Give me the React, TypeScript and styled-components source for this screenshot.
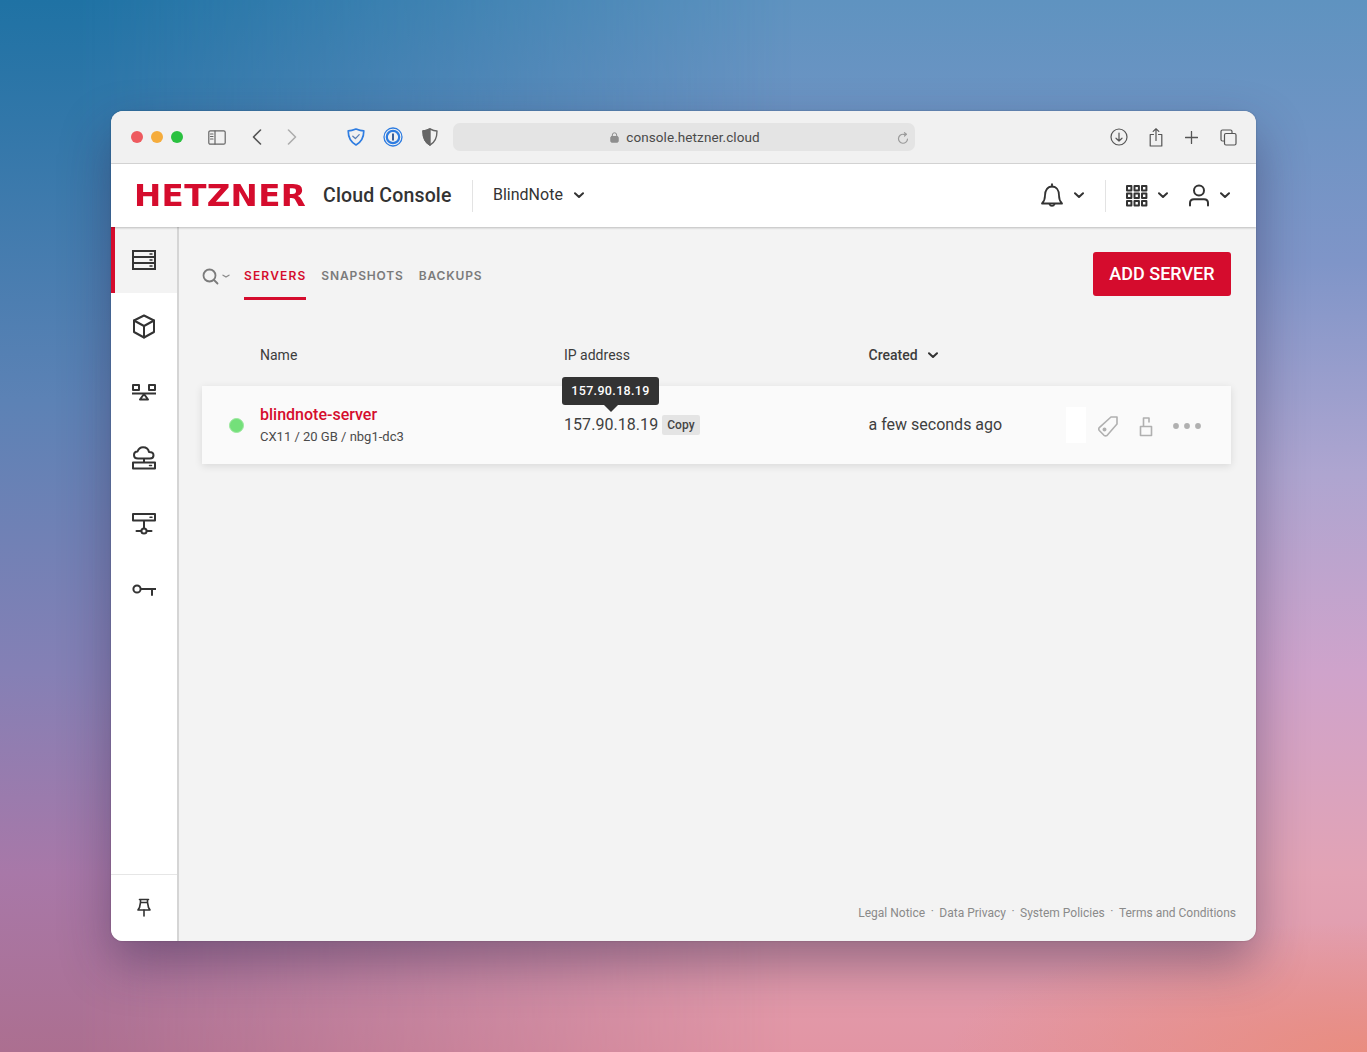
import { FunctionComponent, ReactNode } from "react";
import styled, { createGlobalStyle } from "styled-components";

const GlobalStyle = createGlobalStyle`
  html, body {
    margin: 0;
    padding: 0;
  }
  body {
    font-family: Roboto, "Liberation Sans", sans-serif;
    color: #333333;
  }
`;

const Page = styled.div`
  position: relative;
  width: 1367px;
  height: 1052px;
  box-sizing: border-box;
  padding: 111px;
  overflow: hidden;
  background:
    radial-gradient(ellipse 420px 130px at 100% 100%, #e98d80 0%, rgba(233, 141, 128, 0) 100%),
    linear-gradient(180deg, #5f93c0 0%, #7f95c8 25%, #aea5d0 45%, #cfa3cb 64%, #e2a3b5 83%, #e295a4 100%);
  &::before {
    content: "";
    position: absolute;
    inset: 0;
    background: linear-gradient(180deg, #1f72a4 0%, #5c82b5 38%, #8580b5 64%, #a878a8 83%, #ac6f90 100%);
    -webkit-mask-image: linear-gradient(90deg, #000 0%, #000 6%, transparent 58%);
    mask-image: linear-gradient(90deg, #000 0%, #000 6%, transparent 58%);
  }
`;

const Window = styled.div`
  position: relative;
  width: 1145px;
  height: 830px;
  border-radius: 12px;
  overflow: hidden;
  display: flex;
  flex-direction: column;
  background: #f3f3f3;
  box-shadow: 0 22px 50px rgba(40, 30, 70, 0.42), 0 0 2px rgba(0, 0, 0, 0.25);
`;

/* safari bar */
const Toolbar = styled.div`
  height: 52px;
  flex: none;
  display: flex;
  align-items: center;
  padding-left: 20px;
  background: #f1f1f1;
  border-bottom: 1px solid #d6d6d6;
`;

const Light = styled.span<{ $color: string }>`
  width: 12px;
  height: 12px;
  border-radius: 50%;
  margin-right: 8px;
  background: ${(p) => p.$color};
`;

const ToolSlot = styled.span<{ $left: number; $width?: number }>`
  display: flex;
  justify-content: center;
  align-items: center;
  flex: none;
  width: ${(p) => p.$width ?? 20}px;
  margin-left: ${(p) => p.$left}px;
`;

const UrlBar = styled.div`
  position: relative;
  width: 462px;
  height: 28px;
  margin-left: 13px;
  flex: none;
  border-radius: 7px;
  background: #e4e4e4;
  display: flex;
  align-items: center;
  justify-content: center;
  gap: 7px;
  padding-left: 2px;
  font-size: 13.5px;
  letter-spacing: 0.08px;
  color: #4a4a4a;
  font-family: Roboto, sans-serif;
  box-sizing: border-box;
`;

const Reload = styled.span`
  position: absolute;
  right: 6px;
  top: 9px;
  display: flex;
`;

/* hetzner header */
const Header = styled.header`
  height: 63px;
  flex: none;
  display: flex;
  align-items: center;
  padding-left: 23px;
  background: #ffffff;
  box-shadow: 0 1px 2px rgba(0, 0, 0, 0.22);
  position: relative;
  z-index: 2;
`;

const Logo = styled.div`
  width: 174px;
  flex: none;
  font-family: "DejaVu Sans", sans-serif;
  font-weight: 700;
  font-size: 30px;
  line-height: 30px;
  letter-spacing: 0.3px;
  color: #d50c2d;
  white-space: nowrap;
  transform: scaleX(1.085);
  transform-origin: left center;
`;

const ConsoleTitle = styled.div`
  margin-left: 15px;
  width: 149px;
  flex: none;
  font-family: Roboto, sans-serif;
  font-weight: 500;
  font-size: 19.5px;
  letter-spacing: 0.15px;
  color: #333333;
  white-space: nowrap;
  margin-top: -1px;
`;

const HeaderDivider = styled.span<{ $left: number }>`
  width: 1px;
  height: 32px;
  flex: none;
  background: #e3e3e3;
  margin-left: ${(p) => p.$left}px;
`;

const ProjectName = styled.div`
  margin-left: 20px;
  width: 71px;
  flex: none;
  font-size: 16px;
  color: #333333;
  white-space: nowrap;
  margin-top: -2px;
`;

const HeaderIcon = styled.span<{ $left: number }>`
  display: flex;
  flex: none;
  margin-left: ${(p) => p.$left}px;
`;

const Body = styled.div`
  flex: 1;
  min-height: 0;
  display: flex;
`;

const Sidebar = styled.nav`
  width: 66px;
  flex: none;
  display: flex;
  flex-direction: column;
  background: #ffffff;
  border-right: 2px solid #d5d5d5;
`;

const NavItem = styled.div<{ $active?: boolean }>`
  height: 66px;
  flex: none;
  display: flex;
  align-items: center;
  justify-content: center;
  box-sizing: border-box;
  background: ${(p) => (p.$active ? "#f3f3f3" : "#ffffff")};
  border-left: 4px solid ${(p) => (p.$active ? "#d50c2d" : "#ffffff")};
  padding-right: 4px;
`;

const PinBox = styled.div`
  margin-top: auto;
  height: 67px;
  flex: none;
  box-sizing: border-box;
  padding-bottom: 2px;
  display: flex;
  align-items: center;
  justify-content: center;
  border-top: 1px solid #e6e6e6;
`;

const Main = styled.main`
  flex: 1;
  min-width: 0;
  display: flex;
  flex-direction: column;
  padding: 0 20px 0 23px;
`;

const TabsRow = styled.div`
  height: 73px;
  flex: none;
  display: flex;
  align-items: flex-end;
  padding-right: 5px;
`;

const SearchToggle = styled.div`
  height: 48px;
  width: 42px;
  flex: none;
  display: flex;
  align-items: center;
  gap: 3px;
  box-sizing: border-box;
`;

const Tab = styled.div<{ $active?: boolean }>`
  height: 48px;
  box-sizing: border-box;
  margin-right: 15px;
  display: flex;
  align-items: center;
  font-family: Inter, sans-serif;
  font-size: 12px;
  font-weight: 600;
  letter-spacing: ${(p) => (p.$active ? "1.15px" : "0.85px")};
  color: ${(p) => (p.$active ? "#d50c2d" : "#7b7b7b")};
  border-bottom: 3px solid ${(p) => (p.$active ? "#d50c2d" : "transparent")};
  padding-top: 1px;
`;

const AddButton = styled.button`
  margin-left: auto;
  align-self: flex-end;
  margin-bottom: 4px;
  width: 138px;
  height: 44px;
  border: 0;
  border-radius: 3px;
  background: #d50c2d;
  color: #ffffff;
  font-family: Roboto, sans-serif;
  font-size: 18px;
  font-weight: 500;
  padding: 0 0 2px;
`;

const TableHead = styled.div`
  height: 86px;
  flex: none;
  box-sizing: border-box;
  display: grid;
  grid-template-columns: 362px 304.5px 1fr;
  align-items: end;
  padding-bottom: 23px;
  font-size: 14px;
  line-height: 16px;
  color: #3c3c3c;
  margin-right: 5px;
`;

const HeadCell = styled.div<{ $first?: boolean; $bold?: boolean }>`
  padding-left: ${(p) => (p.$first ? "58px" : "0")};
  font-weight: ${(p) => (p.$bold ? 500 : 400)};
  display: flex;
  align-items: center;
  gap: 10px;
`;

const ServerRow = styled.div`
  height: 78px;
  flex: none;
  margin-right: 5px;
  display: grid;
  grid-template-columns: 362px 304.5px 1fr;
  align-items: center;
  background: #fafafa;
  box-shadow: 0 2px 8px rgba(0, 0, 0, 0.11);
`;

const NameCell = styled.div`
  display: flex;
  align-items: center;
  padding-left: 27px;
`;

const StatusDot = styled.span`
  width: 15px;
  height: 15px;
  flex: none;
  border-radius: 50%;
  margin-right: 16px;
  background: #74e07a;
  border: 1px solid #9ce89f;
  box-sizing: border-box;
`;

const ServerName = styled.div`
  font-size: 16px;
  font-weight: 500;
  color: #d50c2d;
  line-height: 20px;
`;

const ServerMeta = styled.div`
  font-size: 13px;
  color: #4a4a4a;
  line-height: 16px;
  margin-top: 4px;
`;

const IpCell = styled.div`
  position: relative;
  display: flex;
  align-items: center;
  gap: 4px;
  font-size: 16px;
  letter-spacing: 0.05px;
  color: #3f3f3f;
  margin-top: -1px;
`;

const CopyTag = styled.span`
  font-size: 12px;
  font-weight: 500;
  letter-spacing: 0.1px;
  padding: 0 5px;
  height: 20px;
  line-height: 20px;
  border-radius: 2px;
  background: #e4e4e4;
  color: #444444;
`;

const Tooltip = styled.div`
  position: absolute;
  left: -2px;
  top: -38px;
  width: 97px;
  height: 28px;
  border-radius: 3px;
  background: #333333;
  color: #ffffff;
  font-size: 12.5px;
  font-weight: 500;
  letter-spacing: 0.35px;
  line-height: 28px;
  text-align: center;
  &::after {
    content: "";
    position: absolute;
    left: 42px;
    top: 28px;
    border: 7px solid transparent;
    border-top-color: #333333;
    border-bottom: 0;
  }
`;

const CreatedCell = styled.div`
  display: flex;
  align-items: center;
  font-size: 16px;
  color: #3f3f3f;
  margin-top: -1px;
`;

const CreatedText = styled.span`
  width: 197px;
  flex: none;
`;

const Ghost = styled.span`
  width: 20px;
  height: 36px;
  flex: none;
  background: #ffffff;
  margin-right: 11px;
`;

const ActionSlot = styled.span<{ $right: number }>`
  display: flex;
  flex: none;
  margin-top: 3px;
  margin-right: ${(p) => p.$right}px;
`;

const Footer = styled.footer`
  margin-top: auto;
  height: 35px;
  flex: none;
  display: flex;
  justify-content: flex-end;
  font-size: 12px;
  color: #8a8a8a;
  white-space: nowrap;
`;

const FooterDot = styled.span`
  margin: -2px 5.5px 0;
  font-size: 12px;
  line-height: 14px;
`;

const FooterLink = styled.span`
  line-height: 14px;
`;

const Svg: FunctionComponent<{
  w: number;
  h: number;
  stroke?: string;
  sw?: number;
  children: ReactNode;
}> = ({ w, h, stroke = "#333333", sw = 2, children }) => (
  <svg
    width={w}
    height={h}
    viewBox={`0 0 ${w} ${h}`}
    fill="none"
    stroke={stroke}
    strokeWidth={sw}
    strokeLinecap="round"
    strokeLinejoin="round"
  >
    {children}
  </svg>
);

const Chevron: FunctionComponent<{ color?: string; size?: number; sw?: number }> = ({
  color = "#333333",
  size = 10,
  sw = 2,
}) => (
  <Svg w={size} h={size - 3} stroke={color} sw={sw}>
    <path d={`M1 1.2L${size / 2} ${size - 5}L${size - 1} 1.2`} />
  </Svg>
);

const ServerIcon = () => (
  <Svg w={24} h={20} sw={2}>
    <rect x="1" y="1" width="22" height="18" strokeLinejoin="miter" />
    <path d="M1 7h22M1 13h22" />
    <path d="M18 4h2M18 10h2M18 16h2" strokeWidth="1.5" />
  </Svg>
);

const CubeIcon = () => (
  <Svg w={24} h={25} sw={2}>
    <path d="M12 1.5L22 6.5V18L12 23.5L2 18V6.5Z" />
    <path d="M2 6.5L12 12L22 6.5M12 12V23.5" />
  </Svg>
);

const BalancerIcon = () => (
  <Svg w={24} h={17} sw={2}>
    <rect x="1" y="1" width="6" height="5" />
    <rect x="17" y="1" width="6" height="5" />
    <path d="M0.5 9.5h23" />
    <path d="M12 10L8 15.5H16Z" />
  </Svg>
);

const CloudServerIcon = () => (
  <Svg w={24} h={24} sw={2}>
    <path d="M6 12.5C3.5 12.5 2 11 2 9C2 7 3.5 5.5 5.5 5.5C6.5 2.8 8.8 1.2 11 1.2C14 1.2 16.5 3.2 17 6C19.5 6 21.5 7.3 21.5 9.3C21.5 11.3 19.8 12.5 18 12.5Z" />
    <path d="M12 13v3" />
    <rect x="1" y="16.5" width="22" height="6" />
    <path d="M17.5 19.5h2" strokeWidth="1.5" />
  </Svg>
);

const NetworkIcon = () => (
  <Svg w={24} h={22} sw={2}>
    <rect x="1" y="1" width="22" height="6.5" />
    <path d="M18 4.2h2" strokeWidth="1.5" />
    <path d="M12 8v7" />
    <path d="M4.5 18h4.5M15 18h4.5" />
    <circle cx="12" cy="18" r="2.6" />
  </Svg>
);

const KeyIcon = () => (
  <Svg w={24} h={13} sw={2}>
    <circle cx="5" cy="5" r="3.6" />
    <path d="M9 5h14.5M20 5v6" />
  </Svg>
);

const PinIcon = () => (
  <Svg w={14} h={19} sw={1.6}>
    <path d="M2.5 1.5h9M3.5 1.5v3h7v-3M3.5 4.5L2.5 9.5L1 12h12L11.5 9.5L10.5 4.5" />
    <path d="M7 12v6" />
  </Svg>
);

const BellIcon = () => (
  <Svg w={24} h={25} sw={1.8}>
    <path d="M2 20.5C4 18.5 5 16.5 5 12.5C5 7.5 7.5 3.5 12 3.5C16.5 3.5 19 7.5 19 12.5C19 16.5 20 18.5 22 20.5Z" />
    <path d="M12 1.2v2.2" />
    <path d="M9.5 21a2.6 2.6 0 0 0 5 0" />
  </Svg>
);

const GridIcon = () => (
  <Svg w={22} h={22} sw={2}>
    {[1, 8.5, 16].map((y) =>
      [1, 8.5, 16].map((x) => (
        <rect key={`${x}-${y}`} x={x} y={y} width="4.4" height="4.4" />
      )),
    )}
  </Svg>
);

const UserIcon = () => (
  <Svg w={22} h={23} sw={2}>
    <circle cx="11" cy="6.5" r="5" />
    <path d="M2 21.5V19C2 16.5 4 15.3 6 15.3H16C18 15.3 20 16.5 20 19V21.5" />
  </Svg>
);

const App: FunctionComponent = () => {
  return (
    <Page>
      <GlobalStyle />
      <Window>
        <Toolbar>
          <Light $color="#ee5a5f" />
          <Light $color="#f5ac3c" />
          <Light $color="#2ac140" />
          <ToolSlot $left={16}>
            <Svg w={18} h={15} stroke="#666666" sw={1.2}>
              <rect x="0.8" y="0.8" width="16.4" height="13.4" rx="1.5" />
              <path d="M7 1v13" />
              <path d="M2.5 4h2.5M2.5 6.5h2.5M2.5 9h2.5" />
            </Svg>
          </ToolSlot>
          <ToolSlot $left={20}>
            <Svg w={10} h={16} stroke="#555555" sw={1.6}>
              <path d="M8.5 1L1.5 8L8.5 15" />
            </Svg>
          </ToolSlot>
          <ToolSlot $left={15}>
            <Svg w={10} h={16} stroke="#adadad" sw={1.6}>
              <path d="M1.5 1L8.5 8L1.5 15" />
            </Svg>
          </ToolSlot>
          <ToolSlot $left={44}>
            <Svg w={18} h={18} stroke="#2f7de1" sw={1.7}>
              <path d="M1.2 2.8C4 2.8 6.5 2 9 1C11.5 2 14 2.8 16.8 2.8C16.8 9.5 14.5 14 9 17C3.5 14 1.2 9.5 1.2 2.8Z" />
              <path d="M5.8 8.2L8.4 10.6L12.2 6.6" strokeWidth="1.3" stroke="#5a7fb5" />
            </Svg>
          </ToolSlot>
          <ToolSlot $left={17}>
            <Svg w={20} h={20} stroke="#2f7de1" sw={1.3}>
              <circle cx="10" cy="10" r="9" />
              <circle cx="10" cy="10" r="6.2" strokeWidth="2.2" />
              <path d="M10 6.5v7" strokeWidth="2" strokeLinecap="butt" stroke="#3a5f9a" />
            </Svg>
          </ToolSlot>
          <ToolSlot $left={17}>
            <Svg w={16} h={18} stroke="#666666" sw={1.4}>
              <path d="M1 3C3.5 3 6 2 8 1C10 2 12.5 3 15 3C15 10 13 14.5 8 17C3 14.5 1 10 1 3Z" />
              <path d="M8 1C6 2 3.5 3 1 3C1 10 3 14.5 8 17Z" fill="#666666" />
            </Svg>
          </ToolSlot>
          <UrlBar>
            <Svg w={9} h={11} stroke="#8e8e8e" sw={1}>
              <rect x="0.8" y="4.5" width="7.4" height="5.7" fill="#8e8e8e" rx="1" />
              <path d="M2.3 4.5V3a2.2 2.2 0 0 1 4.4 0v1.5" />
            </Svg>
            console.hetzner.cloud
            <Reload>
              <Svg w={12} h={12} stroke="#9b9b9b" sw={1.2}>
                <path d="M10.5 7A4.5 4.5 0 1 1 6.5 2.3H9" />
                <path d="M7.5 0.7L9.4 2.3L7.5 4" />
              </Svg>
            </Reload>
          </UrlBar>
          <ToolSlot $left={194}>
            <Svg w={18} h={18} stroke="#555555" sw={1.2}>
              <circle cx="9" cy="9" r="8" />
              <path d="M9 5v8M6 10.2L9 13L12 10.2" />
            </Svg>
          </ToolSlot>
          <ToolSlot $left={17}>
            <Svg w={14} h={19} stroke="#555555" sw={1.2}>
              <path d="M4.5 6.5H1.2V18H12.8V6.5H9.5" />
              <path d="M7 12.5V1M4.2 3.4L7 0.8L9.8 3.4" />
            </Svg>
          </ToolSlot>
          <ToolSlot $left={15}>
            <Svg w={13} h={13} stroke="#555555" sw={1.3}>
              <path d="M6.5 0.5v12M0.5 6.5h12" />
            </Svg>
          </ToolSlot>
          <ToolSlot $left={17}>
            <Svg w={17} h={17} stroke="#555555" sw={1.2}>
              <path d="M3.5 12H2.5A1.5 1.5 0 0 1 1 10.5V2.5A1.5 1.5 0 0 1 2.5 1H10.5A1.5 1.5 0 0 1 12 2.5V4" />
              <rect x="4.5" y="4.5" width="11.5" height="11.5" rx="1.5" />
            </Svg>
          </ToolSlot>
        </Toolbar>
        <Header>
          <Logo>HETZNER</Logo>
          <ConsoleTitle>Cloud Console</ConsoleTitle>
          <HeaderDivider $left={0} />
          <ProjectName>BlindNote</ProjectName>
          <HeaderIcon $left={10}>
            <Chevron />
          </HeaderIcon>
          <HeaderIcon $left={456}>
            <BellIcon />
          </HeaderIcon>
          <HeaderIcon $left={10}>
            <Chevron />
          </HeaderIcon>
          <HeaderDivider $left={21} />
          <HeaderIcon $left={20}>
            <GridIcon />
          </HeaderIcon>
          <HeaderIcon $left={10}>
            <Chevron />
          </HeaderIcon>
          <HeaderIcon $left={20}>
            <UserIcon />
          </HeaderIcon>
          <HeaderIcon $left={10}>
            <Chevron />
          </HeaderIcon>
        </Header>
        <Body>
          <Sidebar>
            <NavItem $active>
              <ServerIcon />
            </NavItem>
            <NavItem>
              <CubeIcon />
            </NavItem>
            <NavItem>
              <BalancerIcon />
            </NavItem>
            <NavItem>
              <CloudServerIcon />
            </NavItem>
            <NavItem>
              <NetworkIcon />
            </NavItem>
            <NavItem>
              <KeyIcon />
            </NavItem>
            <PinBox>
              <PinIcon />
            </PinBox>
          </Sidebar>
          <Main>
            <TabsRow>
              <SearchToggle>
                <Svg w={17} h={17} stroke="#7b7b7b" sw={1.8}>
                  <circle cx="7.5" cy="7.5" r="6" />
                  <path d="M12 12L15.5 15.5" />
                </Svg>
                <Chevron color="#8a8a8a" size={8} sw={1.3} />
              </SearchToggle>
              <Tab $active>SERVERS</Tab>
              <Tab>SNAPSHOTS</Tab>
              <Tab>BACKUPS</Tab>
              <AddButton>ADD SERVER</AddButton>
            </TabsRow>
            <TableHead>
              <HeadCell $first>Name</HeadCell>
              <HeadCell>IP address</HeadCell>
              <HeadCell $bold>
                Created
                <Chevron />
              </HeadCell>
            </TableHead>
            <ServerRow>
              <NameCell>
                <StatusDot />
                <div>
                  <ServerName>blindnote-server</ServerName>
                  <ServerMeta>CX11 / 20 GB / nbg1-dc3</ServerMeta>
                </div>
              </NameCell>
              <IpCell>
                157.90.18.19
                <CopyTag>Copy</CopyTag>
                <Tooltip>157.90.18.19</Tooltip>
              </IpCell>
              <CreatedCell>
                <CreatedText>a few seconds ago</CreatedText>
                <Ghost />
                <ActionSlot $right={20}>
                  <Svg w={22} h={22} stroke="#b0b0b0" sw={1.6}>
                    <path d="M14 2H20V9L10 20.5C9 21 8 21 7 20.3L2.3 15.5C1.6 14.5 1.6 13.5 2.3 12.6Z" />
                    <circle cx="7.5" cy="14.5" r="1.2" fill="#b0b0b0" />
                  </Svg>
                </ActionSlot>
                <ActionSlot $right={19}>
                  <Svg w={14} h={21} stroke="#b0b0b0" sw={1.6}>
                    <rect x="1.5" y="10.5" width="11" height="9" />
                    <path d="M4.5 10V2H10V6" />
                  </Svg>
                </ActionSlot>
                <ActionSlot $right={0}>
                  <Svg w={30} h={8} stroke="#b0b0b0" sw={0}>
                    <circle cx="4" cy="4" r="2.9" fill="#b0b0b0" />
                    <circle cx="15" cy="4" r="2.9" fill="#b0b0b0" />
                    <circle cx="26" cy="4" r="2.9" fill="#b0b0b0" />
                  </Svg>
                </ActionSlot>
              </CreatedCell>
            </ServerRow>
            <Footer>
              <FooterLink>Legal Notice</FooterLink>
              <FooterDot>·</FooterDot>
              <FooterLink>Data Privacy</FooterLink>
              <FooterDot>·</FooterDot>
              <FooterLink>System Policies</FooterLink>
              <FooterDot>·</FooterDot>
              <FooterLink>Terms and Conditions</FooterLink>
            </Footer>
          </Main>
        </Body>
      </Window>
    </Page>
  );
};

export default App;
